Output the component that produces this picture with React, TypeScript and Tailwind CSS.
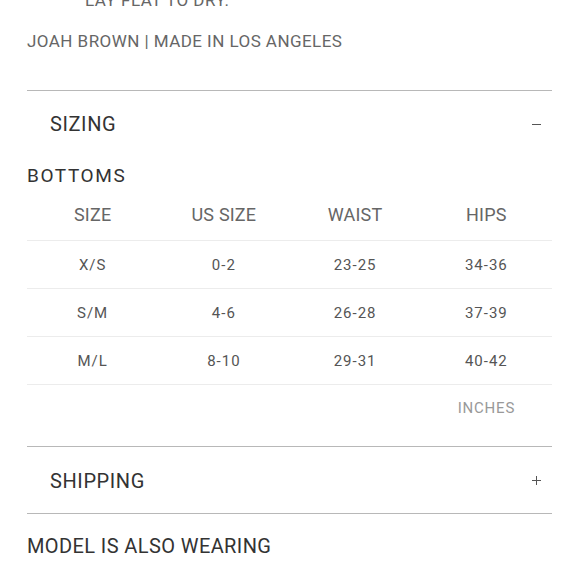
const ROWS = [
  ["X/S", "0-2", "23-25", "34-36"],
  ["S/M", "4-6", "26-28", "37-39"],
  ["M/L", "8-10", "29-31", "40-42"],
];

const HEAD = ["SIZE", "US SIZE", "WAIST", "HIPS"];

function Toggle({ open }: { open: boolean }) {
  return (
    <svg width="11" height="11" viewBox="0 0 11 11" className="text-[#555]">
      <path d="M1 5.5h9" stroke="currentColor" strokeWidth="1" />
      {!open && <path d="M5.5 1v9" stroke="currentColor" strokeWidth="1" />}
    </svg>
  );
}

export default function App() {
  return (
    <div className="h-[579px] overflow-hidden bg-white px-[27px] pr-[28px] font-['Roboto',sans-serif]">
      <div className="-mt-[10px] pl-[58px] text-[17px] leading-[20px] tracking-[0.5px] text-[#666]">
        LAY FLAT TO DRY.
      </div>

      <div className="mt-[19px] text-[17px] leading-[24px] tracking-[0.45px] text-[#666]">
        JOAH BROWN | MADE IN LOS ANGELES
      </div>

      <div className="mt-[37px] border-t border-[#b8b8b8]">
        <div className="flex h-[66px] items-center justify-between pl-[23px] pr-[10px]">
          <span className="text-[20px] tracking-[0.6px] text-[#333]">SIZING</span>
          <Toggle open />
        </div>

        <div className="mt-[7px] text-[19px] leading-[24px] tracking-[1.6px] text-[#333]">
          BOTTOMS
        </div>

        <div className="mt-[5px]">
          <div className="grid h-[48px] grid-cols-4 items-center border-b border-[#ececec] pb-[4px] text-center text-[18px] tracking-[0.2px] text-[#666]">
            {HEAD.map((h) => (
              <span key={h}>{h}</span>
            ))}
          </div>
          {ROWS.map((r) => (
            <div
              key={r[0]}
              className="grid h-[48px] grid-cols-4 items-center border-b border-[#ececec] pt-[2px] text-center text-[15px] tracking-[1px] text-[#555]"
            >
              {r.map((c, i) => (
                <span key={i}>{c}</span>
              ))}
            </div>
          ))}
          <div className="grid h-[46px] grid-cols-4 items-center pt-[1px] text-center text-[15px] tracking-[0.8px] text-[#999]">
            <span className="col-start-4">INCHES</span>
          </div>
        </div>
      </div>

      <div className="mt-[15px] border-y border-[#b8b8b8]">
        <div className="flex h-[66px] items-center justify-between pl-[23px] pr-[10px] pt-[1px]">
          <span className="text-[20px] tracking-[0.6px] text-[#333]">SHIPPING</span>
          <Toggle open={false} />
        </div>
      </div>

      <div className="mt-[20px] text-[20px] leading-[24px] tracking-[0.4px] text-[#333]">
        MODEL IS ALSO WEARING
      </div>
    </div>
  );
}
